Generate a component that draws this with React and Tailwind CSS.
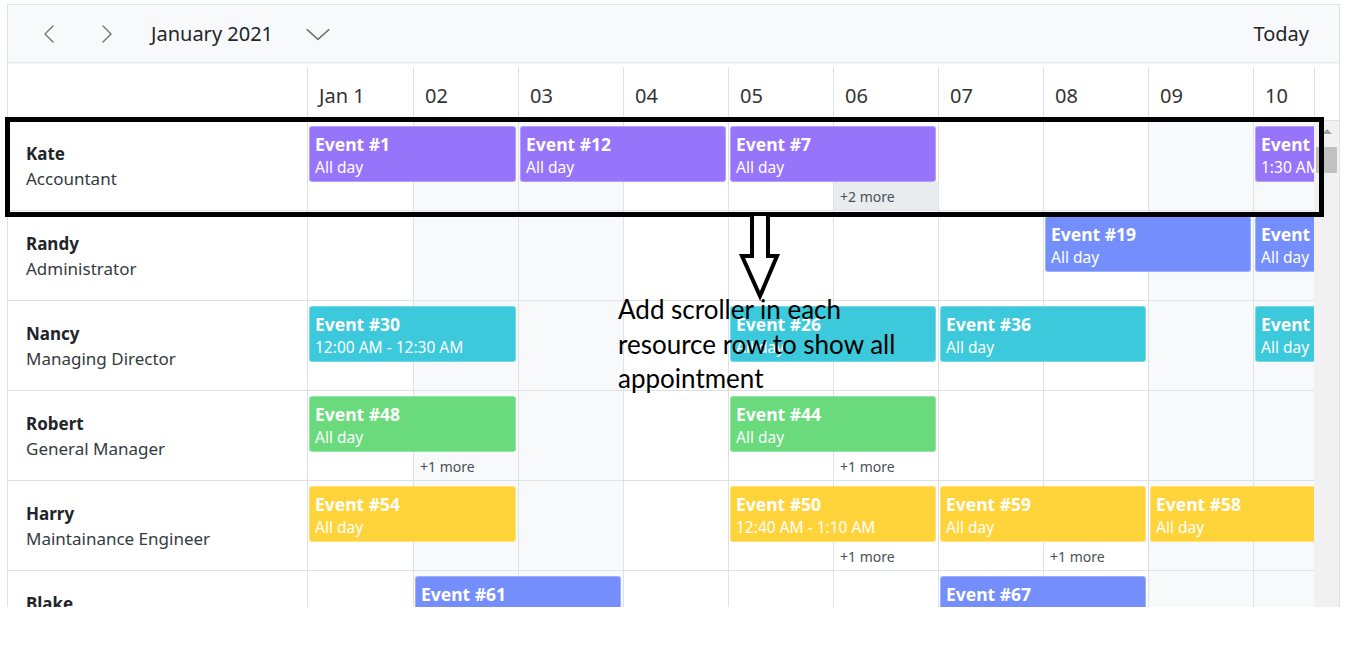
import React from 'react';

const days = ['Jan 1', '02', '03', '04', '05', '06', '07', '08', '09', '10'];
const weekend = [2, 3, 9, 10];

const colStart = {
  1: 'col-start-1', 2: 'col-start-2', 3: 'col-start-3', 4: 'col-start-4', 5: 'col-start-5',
  6: 'col-start-6', 7: 'col-start-7', 8: 'col-start-8', 9: 'col-start-9', 10: 'col-start-10',
};
const colSpan = { 1: 'col-span-1', 2: 'col-span-2' };

const resources = [
  {
    name: 'Kate', role: 'Accountant', color: 'bg-[#9775fa]',
    events: [
      { col: 1, span: 2, title: 'Event #1', sub: 'All day' },
      { col: 3, span: 2, title: 'Event #12', sub: 'All day' },
      { col: 5, span: 2, title: 'Event #7', sub: 'All day' },
      { col: 10, span: 1, title: 'Event #8', sub: '1:30 AM - 2:00 AM' },
    ],
    more: [{ col: 6, text: '+2 more', active: true }],
  },
  {
    name: 'Randy', role: 'Administrator', color: 'bg-[#748ffc]',
    events: [
      { col: 8, span: 2, title: 'Event #19', sub: 'All day' },
      { col: 10, span: 1, title: 'Event #20', sub: 'All day' },
    ],
    more: [],
  },
  {
    name: 'Nancy', role: 'Managing Director', color: 'bg-[#3bc9db]',
    events: [
      { col: 1, span: 2, title: 'Event #30', sub: '12:00 AM - 12:30 AM' },
      { col: 5, span: 2, title: 'Event #26', sub: 'All day' },
      { col: 7, span: 2, title: 'Event #36', sub: 'All day' },
      { col: 10, span: 1, title: 'Event #38', sub: 'All day' },
    ],
    more: [],
  },
  {
    name: 'Robert', role: 'General Manager', color: 'bg-[#69db7c]',
    events: [
      { col: 1, span: 2, title: 'Event #48', sub: 'All day' },
      { col: 5, span: 2, title: 'Event #44', sub: 'All day' },
    ],
    more: [{ col: 2, text: '+1 more' }, { col: 6, text: '+1 more' }],
  },
  {
    name: 'Harry', role: 'Maintainance Engineer', color: 'bg-[#ffd43b]',
    events: [
      { col: 1, span: 2, title: 'Event #54', sub: 'All day' },
      { col: 5, span: 2, title: 'Event #50', sub: '12:40 AM - 1:10 AM' },
      { col: 7, span: 2, title: 'Event #59', sub: 'All day' },
      { col: 9, span: 2, title: 'Event #58', sub: 'All day' },
    ],
    more: [{ col: 6, text: '+1 more' }, { col: 8, text: '+1 more' }],
  },
  {
    name: 'Blake', role: 'Project Lead', color: 'bg-[#748ffc]',
    events: [
      { col: 2, span: 2, title: 'Event #61', sub: 'All day' },
      { col: 7, span: 2, title: 'Event #67', sub: 'All day' },
    ],
    more: [],
  },
];

function Chevron({ points, className }) {
  return (
    <svg className={className} viewBox="0 0 24 24" fill="none" stroke="#6c757d" strokeWidth="1.4" strokeLinecap="round" strokeLinejoin="round">
      <polyline points={points} />
    </svg>
  );
}

function ResourceRow({ res }) {
  return (
    <div className="flex h-[90px] border-b border-[#dee2e6]">
      <div className="w-[300px] shrink-0 border-r border-[#dee2e6] flex flex-col justify-center pl-[18px] pt-[1px]">
        <div className="text-[17px] leading-[25px] font-bold text-[#212529]">{res.name}</div>
        <div className="text-[17px] leading-[25px] text-[#343a40]">{res.role}</div>
      </div>
      <div className="grid grid-cols-[106px_repeat(9,105px)] grid-rows-[5px_56px_1fr] shrink-0">
        {days.map((d, i) => (
          <div
            key={d}
            className={`${colStart[i + 1]} row-start-1 row-span-3 border-r border-[#dee2e6] ${weekend.includes(i + 1) ? 'bg-[#f8f9fa]' : 'bg-white'}`}
          />
        ))}
        {res.more.map((m) => (
          <div
            key={m.col}
            className={`${colStart[m.col]} row-start-3 mr-[1px] flex items-center pl-[6px] text-[14px] text-[#495057] ${m.active ? 'bg-[#e9ecef]' : ''}`}
          >
            {m.text}
          </div>
        ))}
        {res.events.map((e) => (
          <div
            key={e.title}
            className={`${colStart[e.col]} ${colSpan[e.span]} row-start-2 ml-[1px] mr-[3px] ${res.color} rounded-[3px] border border-white/30 pl-[5px] pt-[5px] overflow-hidden whitespace-nowrap text-white`}
          >
            <div className="text-[17.5px] leading-[24px] font-bold">{e.title}</div>
            <div className="text-[15.5px] leading-[22px]">{e.sub}</div>
          </div>
        ))}
      </div>
    </div>
  );
}

export default function App() {
  return (
    <div className="relative w-[1362px] h-[648px] bg-white overflow-hidden" style={{ fontFamily: '"Noto Sans", "Open Sans", sans-serif' }}>
      <div className="ml-[7px] mt-[4px] w-[1333px] h-[603px] border-x border-t border-[#dee2e6] flex flex-col overflow-hidden">
        {/* toolbar */}
        <div className="h-[57px] shrink-0 bg-[#f8f9fa] shadow-[0_1px_2px_rgba(0,0,0,0.12)] flex items-center pl-[30px] pr-[30px] relative z-10">
          <Chevron className="w-[24px] h-[24px]" points="15 4 7 12 15 20" />
          <Chevron className="w-[24px] h-[24px] ml-[32px]" points="9 4 17 12 9 20" />
          <span className="ml-[33px] text-[20px] text-[#212529]">January 2021</span>
          <Chevron className="w-[26px] h-[26px] ml-[32px]" points="2 8 12 17 22 8" />
          <span className="ml-auto text-[20px] text-[#212529]">Today</span>
        </div>
        {/* date header */}
        <div className="flex h-[54px] mt-[5px] shrink-0 border-b border-[#dee2e6]">
          <div className="w-[300px] shrink-0 border-r border-[#dee2e6]" />
          <div className="flex-1 overflow-hidden flex">
            {days.map((d, i) => (
              <div key={d} className={`${i === 0 ? 'w-[106px]' : 'w-[105px]'} shrink-0 border-r border-[#dee2e6] flex items-center pl-[11px] pt-[4px] text-[20px] text-[#333]`}>
                {d}
              </div>
            ))}
          </div>
          <div className="w-[25px] shrink-0 border-l border-[#dee2e6]" />
        </div>
        {/* body */}
        <div className="flex flex-1 min-h-0">
          <div className="flex-1 overflow-hidden">
            {resources.map((r) => (
              <ResourceRow key={r.name} res={r} />
            ))}
          </div>
          <div className="w-[25px] shrink-0 bg-[#f1f1f1] flex flex-col items-center">
            <div className="mt-[8px] w-0 h-0 border-x-[5px] border-x-transparent border-b-[5px] border-b-[#a3a3a3]" />
            <div className="mt-[13px] w-[21px] h-[26px] bg-[#c1c1c1]" />
          </div>
        </div>
      </div>

      {/* annotation overlay */}
      <div className="absolute left-[5px] top-[117px] w-[1319px] h-[100px] border-[5px] border-black pointer-events-none" />
      <svg className="absolute left-[738px] top-[212px]" width="44" height="90" viewBox="738 212 44 90">
        <polygon points="752,214 768,214 768,256 777,256 760,296 742,256 752,256" fill="white" stroke="black" strokeWidth="4" strokeLinejoin="miter" />
      </svg>
      <div className="absolute left-[618px] top-[292px] text-[26px] leading-[34.5px] text-black whitespace-nowrap" style={{ fontFamily: 'Lato, "Open Sans", sans-serif' }}>
        Add scroller in each
        <br />
        resource row to show all
        <br />
        appointment
      </div>
    </div>
  );
}
